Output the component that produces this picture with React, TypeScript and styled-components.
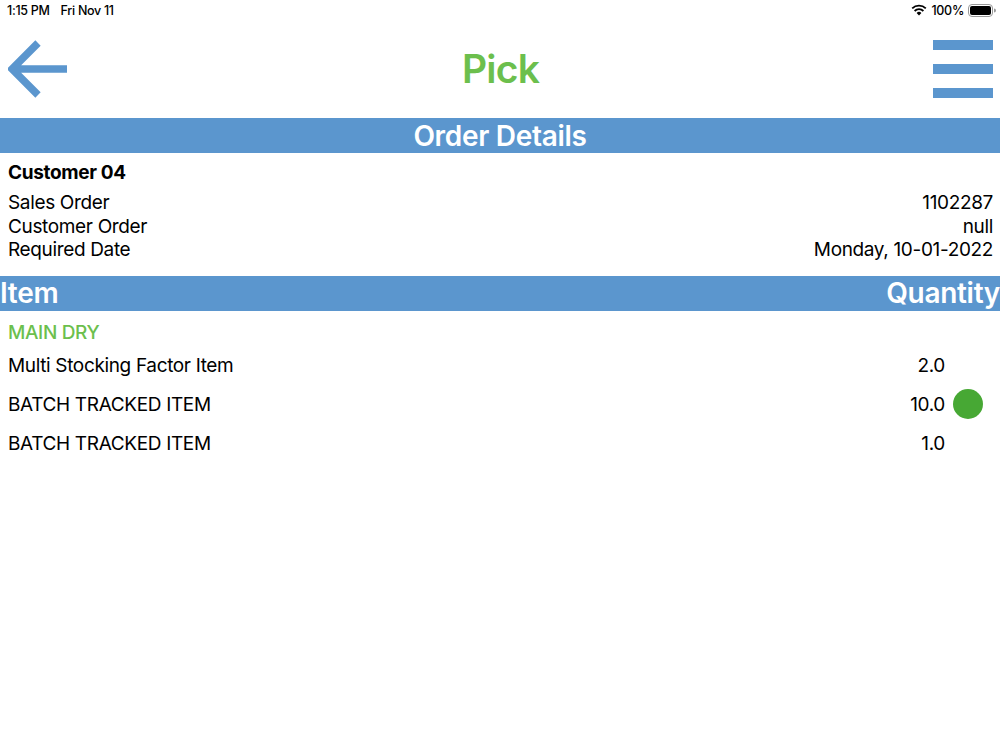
import React from 'react';
import styled, { createGlobalStyle } from 'styled-components';

const GlobalStyle = createGlobalStyle`
  html, body {
    margin: 0;
    padding: 0;
    background: #ffffff;
    font-family: Inter, "Noto Sans", "Liberation Sans", sans-serif;
    color: #000;
  }
`;

const BLUE = '#5b96ce';
const GREEN = '#6cbf4d';

const Screen = styled.div`
  width: 1000px;
  height: 750px;
  background: #fff;
  overflow: hidden;
`;

const StatusBar = styled.div`
  height: 20px;
  display: flex;
  align-items: center;
  justify-content: space-between;
  padding: 0 4px 0 7px;
  font-size: 12.5px;
  font-weight: 500;
  letter-spacing: -0.3px;
`;

const StatusLeft = styled.div`
  display: flex;
  gap: 11px;
`;

const StatusRight = styled.div`
  display: flex;
  align-items: center;
  gap: 4px;
`;

const NavBar = styled.div`
  height: 98px;
  display: flex;
  align-items: center;
  justify-content: space-between;
  padding: 0 7px 0 8px;
`;

const Title = styled.h1`
  margin: 0 0 2px;
  font-size: 39px;
  font-weight: 600;
  color: ${GREEN};
  letter-spacing: -0.8px;
`;

const Bar = styled.div<{ $justify?: string }>`
  height: 35px;
  background: ${BLUE};
  color: #fff;
  display: flex;
  align-items: center;
  justify-content: ${p => p.$justify || 'center'};
  font-size: 28px;
  font-weight: 600;
  letter-spacing: -0.3px;
`;

const Details = styled.div`
  padding: 8px 7px 14px 8px;
  letter-spacing: -0.35px;
`;

const CustomerName = styled.div`
  font-size: 19px;
  font-weight: 700;
  line-height: 24px;
  margin-bottom: 6px;
`;

const InfoRow = styled.div`
  display: flex;
  justify-content: space-between;
  font-size: 19px;
  line-height: 23.5px;
`;

const Items = styled.div`
  padding: 10px 0 0 8px;
  letter-spacing: -0.35px;
`;

const Group = styled.div`
  font-size: 19px;
  font-weight: 500;
  line-height: 24px;
  color: ${GREEN};
  margin-bottom: 1px;
`;

const ItemRow = styled.div`
  height: 39px;
  display: flex;
  align-items: center;
  font-size: 19px;
  padding-top: 1px;
  box-sizing: border-box;
`;

const ItemName = styled.div`
  flex: 1;
`;

const Qty = styled.div`
  text-align: right;
`;

const StatusSlot = styled.div`
  width: 55px;
  display: flex;
  align-items: center;
  padding-left: 8px;
  box-sizing: border-box;
`;

const Dot = styled.div`
  width: 30px;
  height: 30px;
  border-radius: 50%;
  background: #47a834;
  margin-top: -2px;
`;

const BackArrow = () => (
  <svg width="60" height="60" viewBox="0 0 60 60">
    <path d="M30 4 L4 30 L30 56 M4 30 L59 30" fill="none" stroke={BLUE} strokeWidth="7.5" />
  </svg>
);

const Hamburger = () => (
  <svg width="60" height="60" viewBox="0 0 60 60">
    <rect x="0" y="1" width="60" height="10" fill={BLUE} />
    <rect x="0" y="25" width="60" height="10" fill={BLUE} />
    <rect x="0" y="49" width="60" height="10" fill={BLUE} />
  </svg>
);

const Wifi = () => (
  <svg width="16" height="12" viewBox="0 0 16 12">
    <path d="M8 11.5 L5.6 9 A3.5 3.5 0 0 1 10.4 9 Z" fill="#000" />
    <path d="M3.6 7 A6.3 6.3 0 0 1 12.4 7" fill="none" stroke="#000" strokeWidth="1.8" />
    <path d="M1.2 4.4 A9.8 9.8 0 0 1 14.8 4.4" fill="none" stroke="#000" strokeWidth="1.8" />
  </svg>
);

const Battery = () => (
  <svg width="28" height="13" viewBox="0 0 28 13">
    <rect x="0.5" y="0.5" width="24" height="12" rx="3.5" fill="none" stroke="#999" />
    <rect x="2" y="2" width="21" height="9" rx="2" fill="#000" />
    <path d="M26 4.5 A2 2 0 0 1 26 8.5 Z" fill="#999" />
  </svg>
);

const items = [
  { name: 'Multi Stocking Factor Item', qty: '2.0', done: false },
  { name: 'BATCH TRACKED ITEM', qty: '10.0', done: true },
  { name: 'BATCH TRACKED ITEM', qty: '1.0', done: false },
];

export default function App() {
  return (
    <Screen>
      <GlobalStyle />
      <StatusBar>
        <StatusLeft>
          <span>1:15 PM</span>
          <span>Fri Nov 11</span>
        </StatusLeft>
        <StatusRight>
          <Wifi />
          <span>100%</span>
          <Battery />
        </StatusRight>
      </StatusBar>

      <NavBar>
        <BackArrow />
        <Title>Pick</Title>
        <Hamburger />
      </NavBar>

      <Bar>Order Details</Bar>

      <Details>
        <CustomerName>Customer 04</CustomerName>
        <InfoRow><span>Sales Order</span><span>1102287</span></InfoRow>
        <InfoRow><span>Customer Order</span><span>null</span></InfoRow>
        <InfoRow><span>Required Date</span><span>Monday, 10-01-2022</span></InfoRow>
      </Details>

      <Bar $justify="space-between">
        <span>Item</span>
        <span>Quantity</span>
      </Bar>

      <Items>
        <Group>MAIN DRY</Group>
        {items.map((it, i) => (
          <ItemRow key={i}>
            <ItemName>{it.name}</ItemName>
            <Qty>{it.qty}</Qty>
            <StatusSlot>{it.done && <Dot />}</StatusSlot>
          </ItemRow>
        ))}
      </Items>
    </Screen>
  );
}
